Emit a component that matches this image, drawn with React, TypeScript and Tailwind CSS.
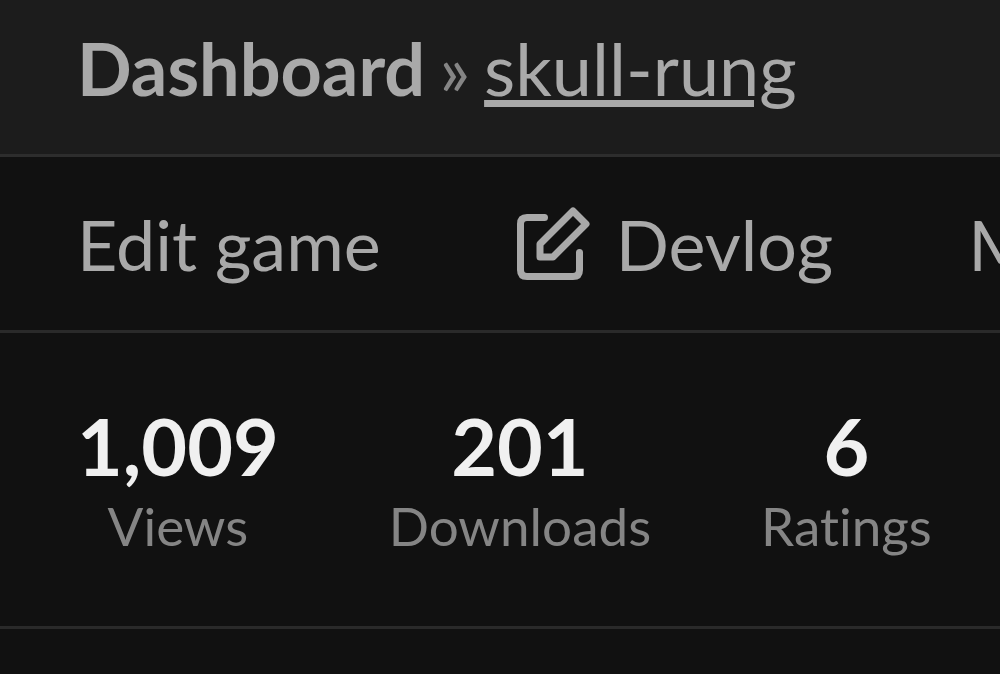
const stats = [
  { value: "1,009", label: "Views" },
  { value: "201", label: "Downloads" },
  { value: "6", label: "Ratings" },
];

function DevlogIcon() {
  return (
    <svg viewBox="0 0 74 74" className="h-[74px] w-[74px] shrink-0" fill="none" stroke="currentColor" strokeWidth="7" strokeLinecap="round" strokeLinejoin="round" aria-hidden="true">
      <path d="M28.5 10.5H11Q4.5 10.5 4.5 17V63Q4.5 69.5 11 69.5H57Q63.5 69.5 63.5 63V45.5" />
      <path d="M24 50V37L57 4L70 17L37 50Z" />
    </svg>
  );
}

export default function App() {
  return (
    <div className="min-h-screen overflow-hidden bg-[#111111] font-['Lato',sans-serif] text-[#a9a9a9] [font-variant-ligatures:none]">
      <header className="flex items-center gap-3.5 border-b-3 border-[#2d2d2d] bg-[#1c1c1c] px-[77px] pt-[26px] pb-11 text-[72px] leading-[84px]">
        <a href="#dashboard" className="font-bold">Dashboard</a>
        <span className="text-[#858585]">»</span>
        <a href="#game" className="underline">skull-rung</a>
      </header>
      <nav className="flex items-center gap-[135px] border-b-3 border-[#2a2a2a] px-[77px] pt-[45px] pb-11 text-[70px] leading-[84px] whitespace-nowrap">
        <a href="#edit">Edit game</a>
        <a href="#devlog" className="flex items-center gap-[26px]">
          <DevlogIcon />
          Devlog
        </a>
        <a href="#metadata">Metadata</a>
      </nav>
      <dl className="flex gap-[110px] border-b-3 border-[#2a2a2a] px-[77px] pt-[65px] pb-[68px]">
        {stats.map((s) => (
          <div key={s.label} className="flex flex-col-reverse text-center">
            <dt className="text-[53px] leading-[64px] text-[#858585]">{s.label}</dt>
            <dd className="text-[79px] leading-[96px] font-bold text-[#f0f0f0]">{s.value}</dd>
          </div>
        ))}
      </dl>
    </div>
  );
}
